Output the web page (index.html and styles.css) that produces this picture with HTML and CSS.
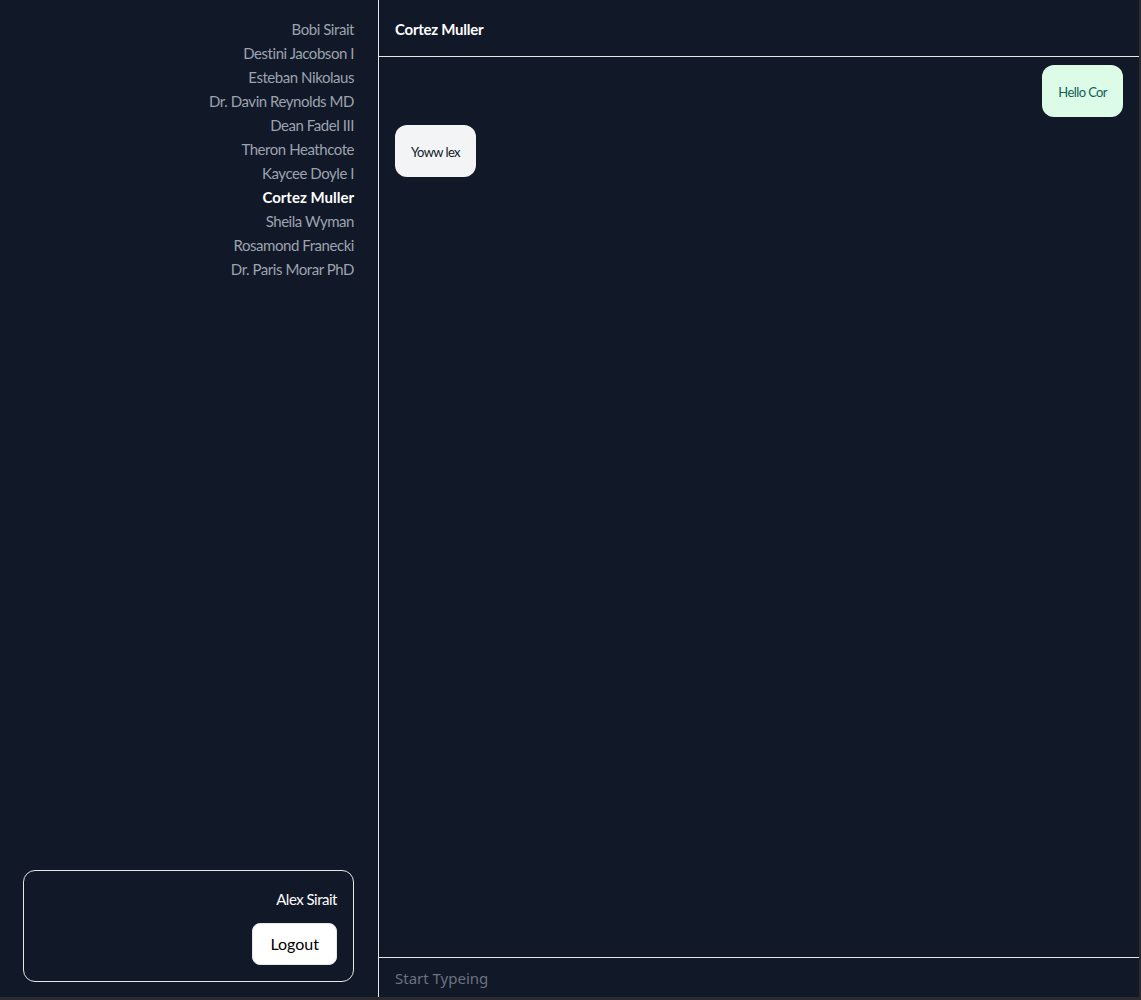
FILE: index.html
```html
<!DOCTYPE html>
<html lang="en">
<head>
    <meta charset="UTF-8">
    <meta name="viewport" content="width=device-width, initial-scale=1.0">
    <title>Chat</title>
    <link rel="stylesheet" href="styles.css">
</head>
<body>
    <div class="app">
        <aside class="sidebar">
            <ul class="contacts">
                <li>Bobi Sirait</li>
                <li>Destini Jacobson I</li>
                <li>Esteban Nikolaus</li>
                <li>Dr. Davin Reynolds MD</li>
                <li>Dean Fadel III</li>
                <li>Theron Heathcote</li>
                <li>Kaycee Doyle I</li>
                <li class="active">Cortez Muller</li>
                <li>Sheila Wyman</li>
                <li>Rosamond Franecki</li>
                <li>Dr. Paris Morar PhD</li>
            </ul>

            <div class="profile">
                <div class="profile-name">Alex Sirait</div>
                <button class="btn-logout">Logout</button>
            </div>
        </aside>

        <main class="chat">
            <div class="chat-header">Cortez Muller</div>

            <div class="messages">
                <div class="bubble bubble-out">Hello Cor</div>
                <div class="bubble bubble-in">Yoww lex</div>
            </div>

            <input class="chat-input" type="text" placeholder="Start Typeing">
        </main>
    </div>
</body>
</html>
```

FILE: styles.css
```css
body {
    margin: 0;
    background: #2a2b2e;
    font-family: "Lato", "Noto Sans", sans-serif;
}
.app {
    display: flex;
    width: 1139px;
    height: 997px;
    background: #111827;
    color: #9ca3af;
}

/* Contact list */
.sidebar {
    width: 379px;
    flex-shrink: 0;
    box-sizing: border-box;
    border-right: 1px solid #e5e7eb;
    padding: 17px 24px 15px 23px;
    display: flex;
    flex-direction: column;
    justify-content: space-between;
}
.contacts {
    list-style: none;
    margin: 0;
    padding: 0;
    text-align: right;
}
.contacts li {
    font-size: 15px;
    line-height: 24px;
    letter-spacing: -0.45px;
    cursor: pointer;
}
.contacts li.active {
    color: white;
    font-weight: bold;
    letter-spacing: 0;
}

.profile {
    border: 1px solid #e5e7eb;
    border-radius: 12px;
    padding: 16px;
    display: flex;
    flex-direction: column;
    align-items: flex-end;
    gap: 12px;
}
.profile-name {
    color: white;
    font-size: 15px;
    line-height: 24px;
    letter-spacing: -0.5px;
}
.btn-logout {
    background: white;
    color: black;
    border: 1px solid #e5e7eb;
    border-radius: 8px;
    padding: 8px 17px;
    font-family: inherit;
    font-size: 16px;
    line-height: 24px;
    cursor: pointer;
}

/* Conversation */
.chat {
    flex: 1;
    display: flex;
    flex-direction: column;
}
.chat-header {
    height: 57px;
    box-sizing: border-box;
    padding: 17px 16px;
    border-bottom: 1px solid #e5e7eb;
    color: white;
    font-weight: bold;
    font-size: 15px;
    line-height: 24px;
    letter-spacing: -0.25px;
}
.messages {
    flex: 1;
    padding: 8px 16px;
    display: flex;
    flex-direction: column;
    gap: 8px;
}
.bubble {
    padding: 17px 16px 15px;
    border-radius: 12px;
    font-size: 13px;
    line-height: 20px;
    letter-spacing: -0.6px;
}
.bubble-out {
    align-self: flex-end;
    background: #dcfce7;
    color: #115e59;
}
.bubble-in {
    align-self: flex-start;
    background: #f3f4f6;
    color: #111827;
}
.chat-input {
    height: 40px;
    box-sizing: border-box;
    border: none;
    border-top: 1px solid #e5e7eb;
    background: transparent;
    padding: 0 16px;
    font-family: "Noto Sans", sans-serif;
    font-size: 15px;
    color: white;
    outline: none;
}
.chat-input::placeholder {
    color: #6b7280;
}
```
